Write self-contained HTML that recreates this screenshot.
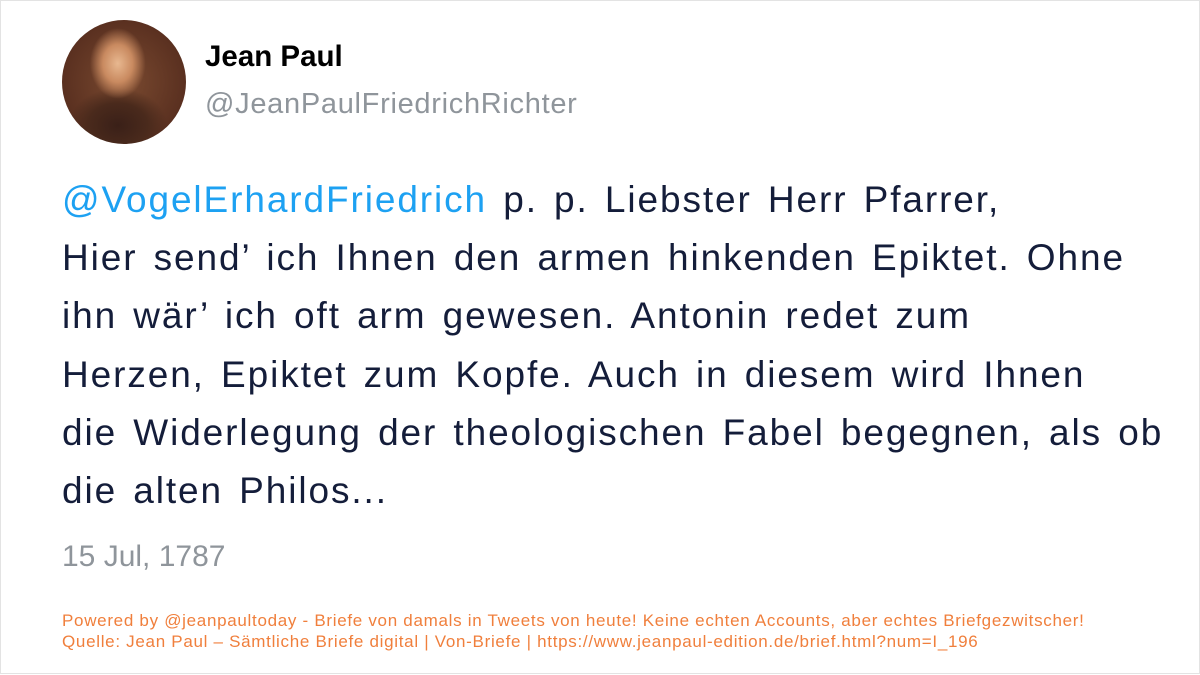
<!DOCTYPE html>
<html><head><meta charset="utf-8"><style>
html,body{margin:0;padding:0;background:#fff;}
body{width:1200px;height:675px;position:relative;overflow:hidden;font-family:"Liberation Sans",sans-serif;}
.frame{position:absolute;left:0;top:0;width:1198px;height:672px;border:1px solid #e3e3e3;}
.av{position:absolute;left:62px;top:20px;width:124px;height:124px;border-radius:50%;
background:radial-gradient(ellipse 30% 38% at 45% 35%,#e8b890 0%,#c98a60 40%,transparent 75%),
radial-gradient(ellipse 40% 30% at 45% 85%,#3a2018 0%,#4a2a1c 60%,transparent 100%),
radial-gradient(circle at 50% 50%,#7a4a30 0%,#5a3020 70%,#3a1c12 100%);}
.name{position:absolute;left:205px;top:40px;font-size:29.5px;font-weight:bold;color:#000;}
.handle{position:absolute;left:205px;top:88px;font-size:29px;color:#8f959b;letter-spacing:0.7px;}
.text{position:absolute;left:62px;top:171px;font-size:37px;line-height:58.2px;color:#141d3a;white-space:nowrap;letter-spacing:1.9px;word-spacing:4px;}
.text a{color:#1da1f2;}
.date{position:absolute;left:62px;top:540px;font-size:30px;color:#8f959b;}
.foot{position:absolute;left:62px;top:610px;font-size:17px;line-height:21px;color:#f07f3c;white-space:nowrap;letter-spacing:0.7px;}
</style></head><body>
<div class="frame"></div>
<div class="av"></div>
<div class="name">Jean Paul</div>
<div class="handle">@JeanPaulFriedrichRichter</div>
<div class="text"><a>@VogelErhardFriedrich</a> p. p. Liebster Herr Pfarrer,<br>Hier send’ ich Ihnen den armen hinkenden Epiktet. Ohne<br>ihn wär’ ich oft arm gewesen. Antonin redet zum<br>Herzen, Epiktet zum Kopfe. Auch in diesem wird Ihnen<br>die Widerlegung der theologischen Fabel begegnen, als ob<br>die alten Philos...</div>
<div class="date">15 Jul, 1787</div>
<div class="foot">Powered by @jeanpaultoday - Briefe von damals in Tweets von heute! Keine echten Accounts, aber echtes Briefgezwitscher!<br>Quelle: Jean Paul – Sämtliche Briefe digital | Von-Briefe | https://www.jeanpaul-edition.de/brief.html?num=I_196</div>
</body></html>
